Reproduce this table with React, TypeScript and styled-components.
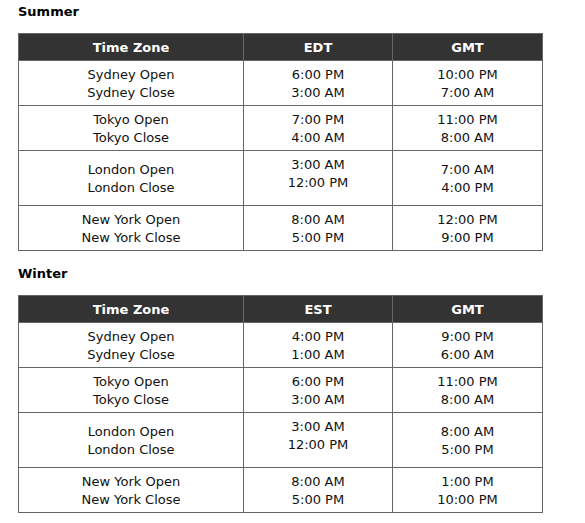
import styled, { createGlobalStyle } from "styled-components";

const GlobalStyle = createGlobalStyle`
  body {
    margin: 0;
    background: #fff;
    font-family: "DejaVu Sans", Verdana, sans-serif;
    font-size: 13px;
    color: #111;
  }
`;

const Page = styled.div`
  padding: 3px 18px;
`;

const Heading = styled.h3`
  margin: 0 0 12px;
  font-size: 13px;
  line-height: 18px;
  font-weight: bold;
  color: #000;
`;

const Table = styled.table`
  width: 525px;
  table-layout: fixed;
  border-collapse: collapse;
  border: 1px solid #666;
  margin-bottom: 14px;
`;

const Th = styled.th`
  background: #333;
  color: #fff;
  font-weight: bold;
  line-height: 18px;
  padding: 5px 0 3px;
  border: 1px solid #666;
  text-align: center;
`;

const Td = styled.td<{ $extra?: boolean }>`
  line-height: 18px;
  padding: 5px 0 ${(p) => (p.$extra ? "13px" : "3px")};
  border: 1px solid #666;
  text-align: center;
  vertical-align: middle;
`;

type Row = { city: string; local: [string, string]; gmt: [string, string] };

const summer: Row[] = [
  { city: "Sydney", local: ["6:00 PM", "3:00 AM"], gmt: ["10:00 PM", "7:00 AM"] },
  { city: "Tokyo", local: ["7:00 PM", "4:00 AM"], gmt: ["11:00 PM", "8:00 AM"] },
  { city: "London", local: ["3:00 AM", "12:00 PM"], gmt: ["7:00 AM", "4:00 PM"] },
  { city: "New York", local: ["8:00 AM", "5:00 PM"], gmt: ["12:00 PM", "9:00 PM"] },
];

const winter: Row[] = [
  { city: "Sydney", local: ["4:00 PM", "1:00 AM"], gmt: ["9:00 PM", "6:00 AM"] },
  { city: "Tokyo", local: ["6:00 PM", "3:00 AM"], gmt: ["11:00 PM", "8:00 AM"] },
  { city: "London", local: ["3:00 AM", "12:00 PM"], gmt: ["8:00 AM", "5:00 PM"] },
  { city: "New York", local: ["8:00 AM", "5:00 PM"], gmt: ["1:00 PM", "10:00 PM"] },
];

const Session = ({ title, zone, rows }: { title: string; zone: string; rows: Row[] }) => (
  <>
    <Heading>{title}</Heading>
    <Table>
      <colgroup>
        <col style={{ width: 225 }} />
        <col style={{ width: 149 }} />
        <col style={{ width: 150 }} />
      </colgroup>
      <thead>
        <tr>
          <Th>Time Zone</Th>
          <Th>{zone}</Th>
          <Th>GMT</Th>
        </tr>
      </thead>
      <tbody>
        {rows.map((r) => (
          <tr key={r.city}>
            <Td>
              {r.city} Open
              <br />
              {r.city} Close
            </Td>
            <Td $extra={r.city === "London"}>
              {r.local[0]}
              <br />
              {r.local[1]}
            </Td>
            <Td>
              {r.gmt[0]}
              <br />
              {r.gmt[1]}
            </Td>
          </tr>
        ))}
      </tbody>
    </Table>
  </>
);

const App = () => {
  return (
    <Page>
      <GlobalStyle />
      <Session title="Summer" zone="EDT" rows={summer} />
      <Session title="Winter" zone="EST" rows={winter} />
    </Page>
  );
};

export default App;
